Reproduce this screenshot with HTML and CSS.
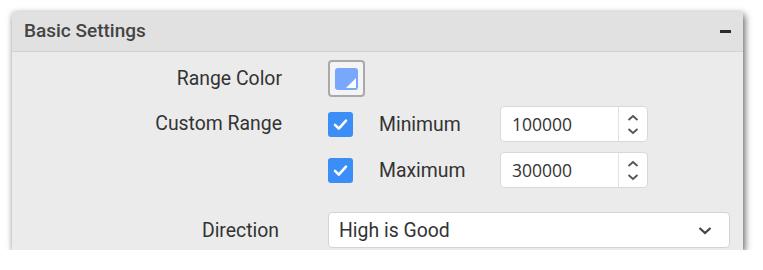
FILE: index.html
```html
<!DOCTYPE html>
<html lang="en">
<head>
    <meta charset="UTF-8">
    <title>Basic Settings</title>
    <link rel="stylesheet" href="styles.css">
</head>
<body>
    <section class="panel">
        <header class="panel-head">
            <span class="panel-title">Basic Settings</span>
            <span class="collapse"></span>
        </header>

        <div class="panel-body">
            <div class="row row-color">
                <label class="label">Range Color</label>
                <div class="picker">
                    <span class="swatch"></span>
                </div>
            </div>

            <div class="row row-range">
                <label class="label">Custom Range</label>
                <div class="range">
                    <div class="range-line">
                        <span class="check">
                            <svg width="25" height="25" viewBox="0 0 25 25"><path d="M7 12.8 L10.8 16.6 L18 8.6" fill="none" stroke="#fff" stroke-width="2.6" stroke-linecap="round" stroke-linejoin="round"/></svg>
                        </span>
                        <span class="sub-label">Minimum</span>
                        <div class="spin">
                            <span class="spin-value">100000</span>
                            <span class="spin-btns">
                                <svg width="12" height="8" viewBox="0 0 12 8"><path d="M1.5 6 L6 2 L10.5 6" fill="none" stroke="#555" stroke-width="1.8"/></svg>
                                <svg width="12" height="8" viewBox="0 0 12 8"><path d="M1.5 2 L6 6 L10.5 2" fill="none" stroke="#555" stroke-width="1.8"/></svg>
                            </span>
                        </div>
                    </div>
                    <div class="range-line">
                        <span class="check">
                            <svg width="25" height="25" viewBox="0 0 25 25"><path d="M7 12.8 L10.8 16.6 L18 8.6" fill="none" stroke="#fff" stroke-width="2.6" stroke-linecap="round" stroke-linejoin="round"/></svg>
                        </span>
                        <span class="sub-label">Maximum</span>
                        <div class="spin">
                            <span class="spin-value">300000</span>
                            <span class="spin-btns">
                                <svg width="12" height="8" viewBox="0 0 12 8"><path d="M1.5 6 L6 2 L10.5 6" fill="none" stroke="#555" stroke-width="1.8"/></svg>
                                <svg width="12" height="8" viewBox="0 0 12 8"><path d="M1.5 2 L6 6 L10.5 2" fill="none" stroke="#555" stroke-width="1.8"/></svg>
                            </span>
                        </div>
                    </div>
                </div>
            </div>

            <div class="row row-direction">
                <label class="label">Direction</label>
                <div class="select">
                    <span>High is Good</span>
                    <svg width="14" height="9" viewBox="0 0 14 9"><path d="M1.5 2 L7 7 L12.5 2" fill="none" stroke="#444" stroke-width="2.2"/></svg>
                </div>
            </div>
        </div>
    </section>
</body>
</html>
```

FILE: styles.css
```css
/* Painel de configurações */
body {
    margin: 0;
    background: #fff;
    font-family: Roboto, "Liberation Sans", Arial, sans-serif;
    color: #333;
}
.panel {
    margin: 12px 0 0 12px;
    width: 731px;
    height: 238px;
    background: #ebebeb;
    box-shadow: 2px 3px 7px rgba(0, 0, 0, 0.55), 0 0 6px rgba(0, 0, 0, 0.12);
    display: flex;
    flex-direction: column;
}
.panel-head {
    height: 39px;
    background: #e1e1e1;
    border-bottom: 1px solid #d2d2d2;
    display: flex;
    align-items: center;
    justify-content: space-between;
    padding: 0 12px;
}
.panel-title {
    font-size: 19px;
    font-weight: 500;
    color: #444;
    margin-top: -2px;
}
.collapse {
    width: 11px;
    height: 3px;
    background: #2b2b2b;
}
.panel-body {
    padding-top: 8px;
    display: flex;
    flex-direction: column;
}
.row {
    display: grid;
    grid-template-columns: 270px 1fr;
    column-gap: 46px;
    align-items: center;
}
.label {
    text-align: right;
    font-size: 19.4px;
    color: #333;
}
.row-range {
    margin-top: 9px;
    align-items: start;
}
.row-range > .label {
    line-height: 36px;
}
.row-direction {
    margin-top: 24px;
}
.row-direction > .label {
    padding-right: 3px;
}

/* seletor de cor */
.picker {
    width: 33px;
    height: 33px;
    border: 2px solid #a9a9a9;
    border-radius: 4px;
    background: #f4f4f4;
    display: flex;
    align-items: center;
    justify-content: center;
}
.swatch {
    width: 23px;
    height: 22px;
    border-radius: 3px;
    background: #78a7fc;
    position: relative;
    overflow: hidden;
}
.swatch::after {
    content: "";
    position: absolute;
    right: 2px;
    bottom: 2px;
    border-style: solid;
    border-width: 0 0 10px 10px;
    border-color: transparent transparent #fff transparent;
}

/* faixa customizada */
.range {
    display: flex;
    flex-direction: column;
    gap: 10px;
}
.range-line {
    display: flex;
    align-items: center;
    height: 36px;
}
.check {
    width: 25px;
    height: 25px;
    border-radius: 3px;
    background: #3b8ef7;
    display: flex;
}
.sub-label {
    width: 121px;
    margin-left: 26px;
    font-size: 19.4px;
    color: #333;
}
.spin {
    width: 146px;
    height: 34px;
    background: #fff;
    border: 1px solid #d8d8d8;
    border-radius: 4px;
    display: flex;
    align-items: stretch;
}
.spin-value {
    flex: 1;
    padding-left: 11px;
    display: flex;
    align-items: center;
    font-family: "Open Sans", "Liberation Sans", sans-serif;
    font-size: 17.5px;
    color: #333;
    border-right: 1px solid #e2e2e2;
}
.spin-btns {
    width: 28px;
    display: flex;
    flex-direction: column;
    align-items: center;
    justify-content: center;
    gap: 5px;
}

/* direção */
.select {
    box-sizing: border-box;
    width: 402px;
    height: 36px;
    background: #fff;
    border: 1px solid #d4d4d4;
    border-radius: 4px;
    display: flex;
    align-items: center;
    justify-content: space-between;
    padding: 0 17px 0 10px;
    font-size: 19.4px;
    color: #333;
}
```
